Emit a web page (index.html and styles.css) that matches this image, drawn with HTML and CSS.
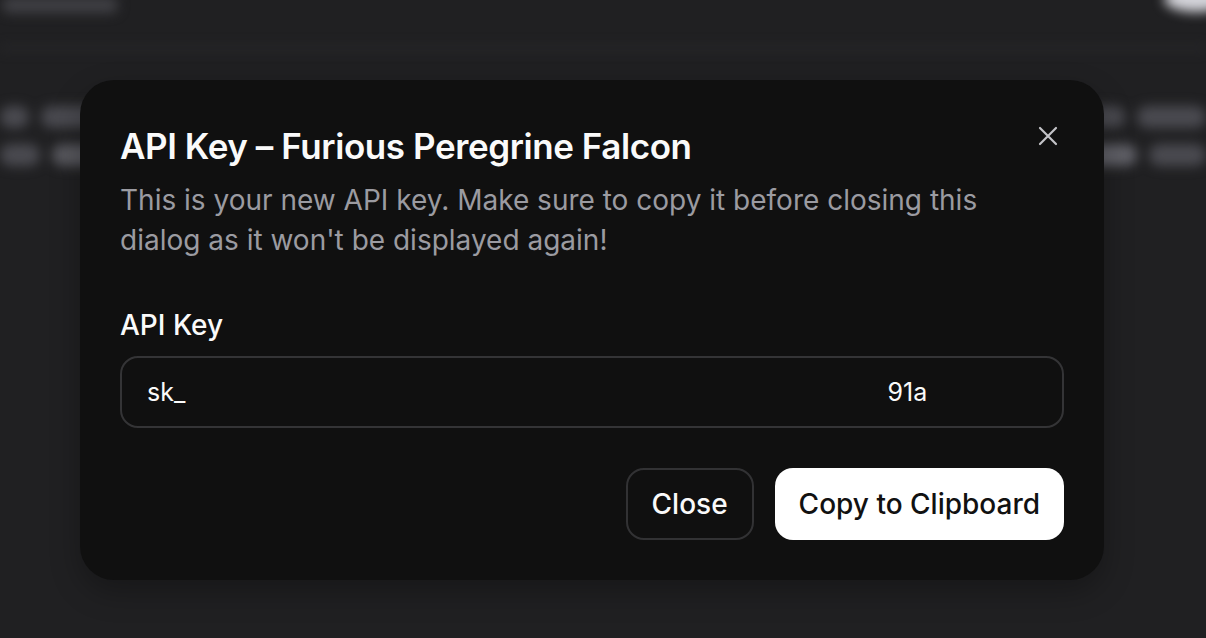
FILE: index.html
```html
<!DOCTYPE html>
<html lang="en">
<head>
<meta charset="utf-8">
<title>API Key</title>
<link rel="stylesheet" href="styles.css">
</head>
<body>
<div class="page" aria-hidden="true">
  <div class="page-header">
    <div class="ph-left"></div>
    <div class="ph-right"></div>
  </div>
  <div class="page-body">
    <div class="row">
      <div class="bar b1"></div><div class="bar b2"></div><div class="bar b3"></div><div class="bar b4"></div><div class="bar b5"></div>
    </div>
    <div class="row row2">
      <div class="bar c1"></div><div class="bar c2"></div><div class="bar c3"></div><div class="bar c4"></div>
    </div>
  </div>
</div>

<div class="dialog" role="dialog" aria-labelledby="dlg-title">
  <button class="x-btn" aria-label="Close">
    <svg width="24" height="24" viewBox="0 0 24 24" fill="none" stroke="#c4c4c8" stroke-width="2.2" stroke-linecap="round"><path d="M4 4L20 20M20 4L4 20"/></svg>
  </button>
  <h2 id="dlg-title" class="title">API Key – Furious Peregrine Falcon</h2>
  <p class="desc">This is your new API key. Make sure to copy it before closing this dialog as it won't be displayed again!</p>
  <label class="label" for="key">API Key</label>
  <div class="input" id="key">
    <span class="k-start">sk_</span>
    <span class="k-gap"></span>
    <span class="k-end"><span>91a</span></span>
  </div>
  <div class="actions">
    <button class="btn btn-outline">Close</button>
    <button class="btn btn-solid">Copy to Clipboard</button>
  </div>
</div>
</body>
</html>
```

FILE: styles.css
```css
* { box-sizing: border-box; }
html, body {
  margin: 0;
  height: 100%;
}
body {
  background: #202022;
  font-family: Inter, "Noto Sans", sans-serif;
  overflow: hidden;
  position: relative;
}

/* blurred page behind the dialog */
.page {
  filter: blur(6px);
}
.page-header {
  height: 50px;
  border-bottom: 4px solid #2a2a2d;
  display: flex;
  justify-content: space-between;
  align-items: flex-start;
}
.ph-left {
  width: 116px;
  height: 16px;
  margin-left: 2px;
  margin-top: -3px;
  background: #404045;
  border-radius: 8px;
}
.ph-right {
  width: 64px;
  height: 26px;
  margin-top: -14px;
  margin-right: -22px;
  background: #d4d4da;
  border-radius: 50%;
}
.page-body {
  padding-top: 56px;
}
.row {
  display: flex;
  gap: 12px;
  height: 24px;
}
.row2 {
  margin-top: 14px;
}
.bar {
  height: 22px;
  border-radius: 11px;
  background: #4a4a50;
}
.b1 { width: 30px; }
.b2 { width: 980px; }
.b3 { width: 60px; background: #505056; }
.b4 { width: 40px; }
.b5 { width: 70px; }
.c1 { width: 42px; }
.c2 { width: 1060px; background: #58585e; }
.c3 { width: 80px; background: #606067; }
.c4 { width: 60px; }

/* dialog */
.dialog {
  position: absolute;
  left: 80px;
  top: 80px;
  width: 1024px;
  height: 500px;
  background: #101010;
  border-radius: 34px;
  padding: 40px;
  box-shadow: 0 12px 30px rgba(0, 0, 0, 0.28);
  display: flex;
  flex-direction: column;
  color: #fff;
}
.x-btn {
  position: absolute;
  top: 44px;
  right: 44px;
  width: 24px;
  height: 24px;
  padding: 0;
  border: 0;
  background: none;
  display: flex;
}
.title {
  margin: 4px 0 0;
  font-size: 35px;
  line-height: 44px;
  font-weight: 600;
  letter-spacing: -0.42px;
  color: #fafafa;
}
.desc {
  margin: 12px 0 0;
  font-size: 28px;
  line-height: 40px;
  font-weight: 400;
  color: #9b9ba1;
  max-width: 880px;
}
.label {
  margin-top: 48px;
  font-size: 28px;
  line-height: 34px;
  font-weight: 500;
  color: #fafafa;
}
.input {
  margin-top: 14px;
  height: 72px;
  border: 2px solid #343436;
  border-radius: 18px;
  padding: 0 25px;
  display: flex;
  align-items: center;
  font-size: 25px;
  color: #fafafa;
}
.k-gap {
  width: 702px;
}
.k-end {
  width: 40px;
  display: flex;
  justify-content: flex-end;
  overflow: hidden;
  white-space: nowrap;
}
.actions {
  margin-top: auto;
  display: flex;
  justify-content: flex-end;
  gap: 21px;
}
.btn {
  height: 72px;
  border-radius: 18px;
  font-family: Inter, "Noto Sans", sans-serif;
  font-size: 28px;
  font-weight: 500;
  padding: 0 24px;
}
.btn-outline {
  background: transparent;
  color: #fafafa;
  border: 2px solid #323234;
}
.btn-solid {
  background: #ffffff;
  color: #111;
  border: 0;
}
```
